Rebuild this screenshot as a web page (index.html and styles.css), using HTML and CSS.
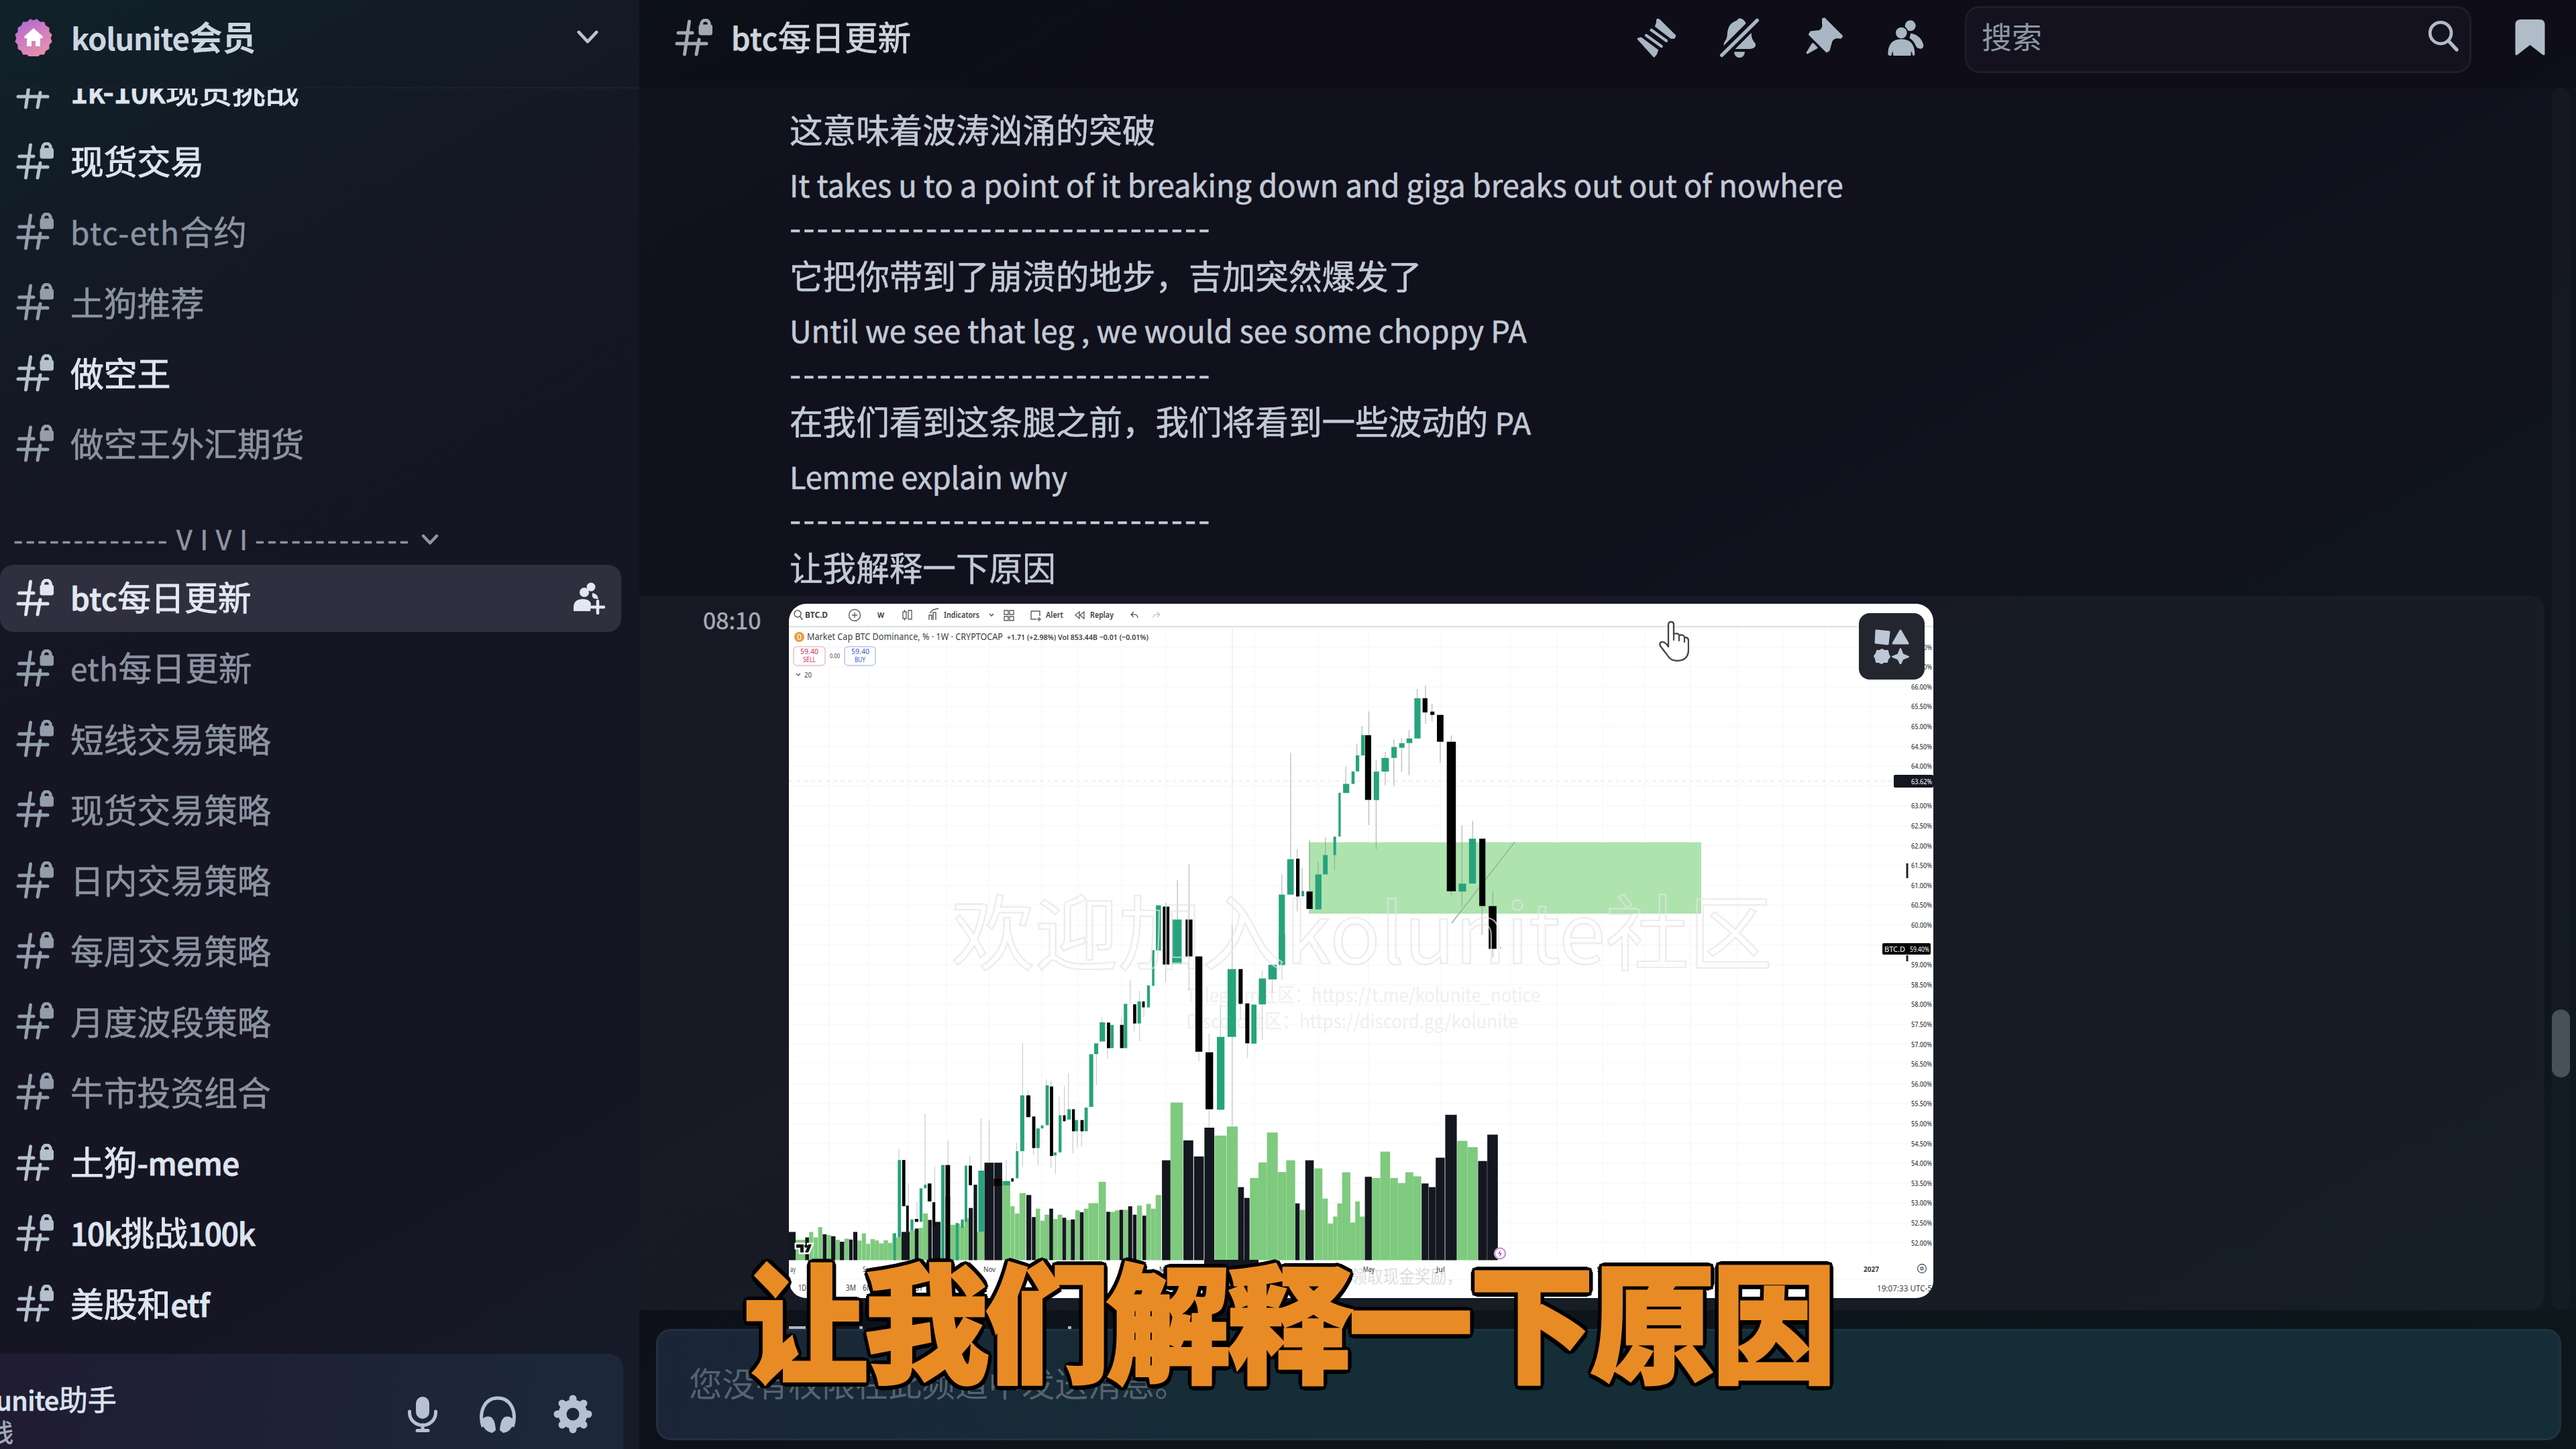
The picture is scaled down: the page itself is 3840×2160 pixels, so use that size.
FILE: index.html
```html
<!DOCTYPE html>
<html lang="zh-CN">
<head>
<meta charset="utf-8">
<title>btc每日更新</title>
<link rel="stylesheet" href="styles.css">
</head>
<body>
<svg class="defs" aria-hidden="true">
  <symbol id="hash" viewBox="0 0 56 56">
    <path d="M21.5 4 14.5 53M36 31 32 53M5 21H26M3 37H47" fill="none" stroke="currentColor" stroke-width="5" stroke-linecap="round"/>
    <path d="M39.500 12V8.500a6 6.500 0 0 1 12 0V12" fill="none" stroke="currentColor" stroke-width="5"/>
    <rect x="35.500" y="8.500" width="20.500" height="16" rx="3.500" fill="currentColor"/>
  </symbol>
</svg>
<div class="app">
  <aside class="sidebar">
    <header class="server">
      <svg class="badge" viewBox="0 0 56 56"><defs><linearGradient id="bg" x1="0" y1="0" x2=".6" y2="1"><stop offset="0" stop-color="#a866d6"/><stop offset=".5" stop-color="#cf7cc0"/><stop offset="1" stop-color="#e48fae"/></linearGradient></defs>
        <path fill="url(#bg)" stroke="url(#bg)" stroke-width="3" stroke-linejoin="round" d="M28 4l5-2 4 4 6 0 2 5 5 3 0 6 4 4-2 5 2 5-4 4 0 6-5 3-2 5-6 0-4 4-5-2-5 2-4-4-6 0-2-5-5-3 0-6-4-4 2-5-2-5 4-4 0-6 5-3 2-5 6 0 4-4z"/>
        <path fill="#fff" d="M28 14 14.500 26v3H18V41h7V33h6v8h7V29h3.500V26z"/></svg>
      <h1 class="server-name"><span class="l">kolunite</span>会员</h1>
      <svg class="chevron" viewBox="0 0 36 22"><path d="M4 3 18 18 32 3" fill="none" stroke="currentColor" stroke-width="5" stroke-linecap="round" stroke-linejoin="round"/></svg>
    </header>
    <nav class="channels">
      <a class="ch unread"><svg class="hash"><use href="#hash"/></svg><span class="name"><span class="l">1k-10k</span>现货挑战</span></a>
      <a class="ch unread"><svg class="hash"><use href="#hash"/></svg><span class="name">现货交易</span></a>
      <a class="ch"><svg class="hash"><use href="#hash"/></svg><span class="name"><span class="l wide">btc-eth</span>合约</span></a>
      <a class="ch"><svg class="hash"><use href="#hash"/></svg><span class="name">土狗推荐</span></a>
      <a class="ch unread"><svg class="hash"><use href="#hash"/></svg><span class="name">做空王</span></a>
      <a class="ch"><svg class="hash"><use href="#hash"/></svg><span class="name">做空王外汇期货</span></a>
      <div class="category"><span class="dash">-------------</span><span class="vivi">V I V I</span><span class="dash">-------------</span><svg viewBox="0 0 36 22"><path d="M4 3 18 18 32 3" fill="none" stroke="currentColor" stroke-width="6" stroke-linecap="round" stroke-linejoin="round"/></svg></div>
      <a class="ch active"><svg class="hash"><use href="#hash"/></svg><span class="name"><span class="l">btc</span>每日更新</span>
        <svg class="invite" viewBox="0 0 48 48"><g fill="currentColor"><circle cx="17" cy="15" r="7"/><circle cx="27" cy="7" r="6.500"/><path d="M29 16q8 1 9 9l-7-1q-3-2-2-8zM1 43V36Q2 25 15 25q10 0 12 7l-1 11z"/></g><path d="M37 28V46M28 37H46" stroke="currentColor" stroke-width="4.500" stroke-linecap="round"/></svg></a>
      <a class="ch"><svg class="hash"><use href="#hash"/></svg><span class="name"><span class="l">eth</span>每日更新</span></a>
      <a class="ch"><svg class="hash"><use href="#hash"/></svg><span class="name">短线交易策略</span></a>
      <a class="ch"><svg class="hash"><use href="#hash"/></svg><span class="name">现货交易策略</span></a>
      <a class="ch"><svg class="hash"><use href="#hash"/></svg><span class="name">日内交易策略</span></a>
      <a class="ch"><svg class="hash"><use href="#hash"/></svg><span class="name">每周交易策略</span></a>
      <a class="ch"><svg class="hash"><use href="#hash"/></svg><span class="name">月度波段策略</span></a>
      <a class="ch"><svg class="hash"><use href="#hash"/></svg><span class="name">牛市投资组合</span></a>
      <a class="ch unread"><svg class="hash"><use href="#hash"/></svg><span class="name">土狗<span class="l">-meme</span></span></a>
      <a class="ch unread"><svg class="hash"><use href="#hash"/></svg><span class="name"><span class="l tight">10k</span>挑战<span class="l tight">100k</span></span></a>
      <a class="ch unread"><svg class="hash"><use href="#hash"/></svg><span class="name">美股和<span class="l">etf</span></span></a>
    </nav>
    <section class="user">
      <div class="who"><div class="nick"><span class="l">kolunite</span>助手</div><div class="status">在线</div></div>
      <svg class="ui" viewBox="0 0 58 58"><rect x="19" y="3" width="20" height="33" rx="10" fill="currentColor"/><path d="M9.500 25v2a19.500 18.500 0 0 0 39 0v-2M29 45v8M21 53.500h16" fill="none" stroke="currentColor" stroke-width="5" stroke-linecap="round"/></svg>
      <svg class="ui" viewBox="0 0 58 58"><path d="M7 48C0 26 9 5 29 5s29 21 22 43" fill="none" stroke="currentColor" stroke-width="5"/><path d="M5 38q5-7 13-5 7 3 8 20l-5 4q-14-2-16-19zM53 38q-5-7-13-5-7 3-8 20l5 4q14-2 16-19z" fill="currentColor"/></svg>
      <svg class="ui" viewBox="0 0 58 58"><circle cx="29" cy="29" r="15.500" fill="none" stroke="currentColor" stroke-width="12"/><g stroke="currentColor" stroke-width="11" stroke-linecap="round"><path d="M29 6v6M29 46v6M6 29h6M46 29h6M13 13l4 4M41 41l4 4M13 45l4-4M41 17l4-4"/></g></svg>
    </section>
  </aside>

  <main class="main">
    <header class="topbar">
      <svg class="hash"><use href="#hash"/></svg>
      <h2 class="title"><span class="l">btc</span>每日更新</h2>
      <div class="tools">
        <svg viewBox="0 0 192 192"><g fill="currentColor" stroke="currentColor" stroke-linejoin="round" stroke-linecap="round"><path stroke-width="10" d="M107 17h6L185 88l-4 8H168L101 45l6-16zM22 102l11-3L106 153l-6 16-8 10z"/><path stroke-width="13" fill="none" d="M80 62 147 110M57 86 125 135"/></g></svg>
        <svg viewBox="0 0 192 192"><g fill="currentColor"><path d="M103 10Q122 12 131 33L31 133Q30 122 40 108 47 98 48 75 52 30 90 20 95 11 103 10zM155 75Q155 105 173 122 180 143 150 147H83zM78 160H126A24 26 0 0 1 78 160z"/><path stroke="currentColor" stroke-width="16" stroke-linecap="round" d="M23 175 181 19"/></g></svg>
        <svg viewBox="0 0 192 192"><g fill="currentColor" stroke="currentColor" stroke-width="10" stroke-linejoin="round"><path d="M104 14 109 12 187 90 182 96Q150 90 140 112L129 152 120 158 44 82 50 72 88 68Q110 55 104 32zM34 164 58 125 74 141z"/></g></svg>
        <svg viewBox="0 0 192 192"><g fill="currentColor"><circle cx="122" cy="43" r="24"/><path d="M124 77Q170 85 181 130 180 150 162 145 148 142 143 125 135 108 118 98z"/><circle cx="82" cy="75" r="31" class="cut"/><circle cx="82" cy="75" r="25"/><path d="M22 170Q22 104 82 103 142 104 142 170 142 177 134 177L126 155 124 177H46L43 155 37 177Q22 177 22 170z"/></g></svg>
      </div>
      <div class="search"><span>搜索</span><svg viewBox="0 0 50 50"><circle cx="20" cy="20" r="16.500" fill="none" stroke="currentColor" stroke-width="5"/><path d="M32 32 45 46" stroke="currentColor" stroke-width="5.500" stroke-linecap="round"/></svg></div>
      <svg class="bookmark" viewBox="0 0 44 54"><path fill="currentColor" d="M0 8Q0 0 8 0H36Q44 0 44 8V51Q44 55 40 52L22 38 4 52Q0 55 0 51z"/></svg>
    </header>

    <section class="feed">
      <div class="log">
        <div class="message">
          <p class="zh">这意味着波涛汹涌的突破</p>
          <p class="en"><span class="l">It takes u to a point of it breaking down and giga breaks out out of nowhere</span></p>
          <p class="rule">-------------------------------</p>
          <p class="zh">它把你带到了崩溃的地步，吉加突然爆发了</p>
          <p class="en"><span class="l">Until we see that leg , we would see some choppy PA</span></p>
          <p class="rule">-------------------------------</p>
          <p class="zh">在我们看到这条腿之前，我们将看到一些波动的<span class="l"> PA</span></p>
          <p class="en"><span class="l snug">Lemme explain why</span></p>
          <p class="rule">-------------------------------</p>
          <p class="zh">让我解释一下原因</p>
        </div>
        <div class="message hover">
          <time>08:10</time>
          <div class="shot">
            <svg id="chart" class="chart" viewBox="1176 900 1706 1035"></svg>
            <button class="apps"><svg viewBox="0 0 54 52"><g fill="currentColor" stroke="currentColor" stroke-width="3" stroke-linejoin="round"><path d="M4 2 23 4 21 22 3 20zM40 2 51 21H29z"/><path d="M12 30l4 2 5 0 1 5 2 4-3 4-1 4-5 0-3 2-4-2-4 0-1-5-2-4 3-4 1-4 4 0zM40 29l3.500 8.500L52 41l-8.500 3.500L40 52l-3.500-7.500L28 41l8.500-3.500z" stroke-width="2"/></g></svg></button>
          </div>
        </div>
      </div>
      <div class="track"><div class="thumb"></div></div>
    </section>

    <footer class="composer">
      <svg class="sliver" viewBox="0 0 430 4"><path fill="#aeb6c2" d="M0 0h25v4H0zM105 0h5v4h-5zM210 0h5v4h-5zM416 0h5v4h-5z"/></svg>
      <div class="box">您没有权限在此频道中发送消息。</div>
    </footer>
  </main>
</div>

<svg class="cursor" viewBox="0 0 46 62"><path d="M15 34V6q0-4 4-4t4 4V20q7-2 8 2 7-2 8 3 6 0 6 5V43Q45 60 28 60 18 60 13 51L3 38Q1 33 5 32 10 31 15 39z" fill="#fff" stroke="#45464c" stroke-width="2.400" stroke-linejoin="round"/><path d="M23 20v9M31 23v7M39 26v6" stroke="#45464c" stroke-width="2.200" stroke-linecap="round"/></svg>
<div class="caption">让我们解释一下原因</div>
<script src="chart.js"></script>
</body>
</html>
```
FILE: styles.css
```css
* { box-sizing: border-box; margin: 0; padding: 0; }

body {
  width: 3840px;
  height: 2160px;
  overflow: hidden;
  position: relative;
  font-family: "Noto Sans CJK SC", sans-serif;
  font-size: 49.6px;
  color: #c3c8d2;
  background: linear-gradient(to bottom right, #10212a 0%, #121c26 8%, #141824 16%, #161524 25%, #161524 50%, #151b28 60%, #142127 72%, #13252b 100%);
}

.defs { position: absolute; width: 0; height: 0; }
.app { display: flex; width: 3840px; height: 2160px; }

/* latin runs next to chinese glyphs */
.l { font-size: .912em; white-space: pre; }

.hash { width: 56px; height: 56px; flex: none; }

/* sidebar */
.sidebar { width: 953px; display: flex; flex-direction: column; flex: none; overflow: hidden; }
.server { height: 132px; flex: none; display: flex; align-items: center; padding: 0 60px 19px 22px; border-bottom: 2px solid #1a202c; }
.badge { width: 56px; height: 56px; }
.server-name { flex: 1; margin: -3px 0 0 28px; font-size: 49.8px; line-height: 60px; font-weight: 700; color: #ccd6e2; }
.server-name .l { font-weight: 700; letter-spacing: -1.200px; }
.chevron { width: 34px; height: 21px; color: #b9c2cf; }

.channels { flex: 1; overflow: hidden; display: flex; flex-direction: column; font-size: 49.8px; -webkit-text-stroke: .6px currentColor; }
.channels > :first-child { margin-top: -46px; }
.ch { height: 100px; margin-bottom: 5.250px; margin-right: 27px; padding-left: 24px; padding-right: 24px; display: flex; align-items: center; flex: none; color: #8b93a1; border-radius: 0 22px 22px 0; }
.ch .name { flex: 1; margin: -6px 0 0 25px; line-height: 60px; white-space: nowrap; }
.ch .hash { color: #939dab; margin-top: -3px; }
.ch .l { font-size: .92em; letter-spacing: .5px; }
.ch .l.wide { letter-spacing: 1.600px; }
.unread { color: #dde5ee; -webkit-text-stroke-width: 1px; }
.ch.unread .l { font-weight: 500; letter-spacing: -.5px; }
.ch.unread .l.tight { letter-spacing: -1.100px; }
.unread .hash { color: #b4c0cd; }
.active { color: #e2e8f2; background: #302f3f; border-radius: 20px; -webkit-text-stroke-width: 1px; }
.active .hash { color: #dfe6f0; }
.active .l { font-weight: 500; }
.invite { width: 48px; height: 48px; }
.category { height: 124.500px; flex: none; display: flex; align-items: center; padding: 44px 0 0 20px; color: #8f95a3; white-space: pre; font-size: 41px; line-height: 60px; }
.category .dash { letter-spacing: 3.700px; }
.category .vivi { margin: 0 10px 0 10px; letter-spacing: 1.200px; }
.category svg { width: 26px; height: 17px; margin-left: 15px; margin-top: 6px; }

.user { height: 142px; flex: none; margin-right: 24px; border-radius: 0 22px 0 0; background: linear-gradient(100deg, #201c33, #1c2737 85%); display: flex; align-items: flex-start; padding-right: 46px; overflow: hidden; -webkit-text-stroke: .7px currentColor; }
.who { flex: 1; height: 142px; overflow: hidden; display: flex; flex-direction: column; padding-top: 41px; margin-left: -54px; }
.nick { font-size: 43px; line-height: 50px; color: #dbe3ee; white-space: nowrap; margin-left: -8px; }
.nick .l { font-weight: 500; letter-spacing: -.6px; }
.status { font-size: 37px; line-height: 46px; color: #a3abb8; }
.ui { width: 58px; height: 58px; margin: 61px 0 0 54px; color: #b6c1d1; flex: none; }

/* main column */
.main { flex: 1; display: flex; flex-direction: column; background: rgba(4, 4, 10, .43); }
.topbar { height: 131px; flex: none; display: flex; align-items: center; padding: 0 46px 20px 53px; }
.topbar .hash { color: #a3a9b3; }
.title { flex: 1; font-size: 49.6px; line-height: 60px; font-weight: 400; color: #ced4de; margin: -2px 0 0 28px; -webkit-text-stroke: .8px currentColor; }
.title .l { font-weight: 500; letter-spacing: .6px; }
.tools { display: flex; gap: 60px; color: #a9b6c3; margin-right: 58px; }
.tools svg { width: 64px; height: 64px; }
.tools .cut { fill: #0d0c17; }
.search { width: 755px; height: 100px; margin-top: 6px; border: 3px solid #1f1e2a; border-radius: 22px; background: #13121e; display: flex; align-items: center; justify-content: space-between; padding: 0 14px 9px 22px; color: #8d97a5; font-size: 45px; line-height: 60px; }
.search svg { width: 48px; height: 48px; color: #b3bac6; }
.bookmark { width: 45px; height: 54px; margin-left: 65px; color: #b0bcc8; }

.feed { height: 1822px; flex: none; display: flex; overflow: hidden; background: rgba(32, 32, 50, .2); }
.log { flex: 1; display: flex; flex-direction: column; }
.message { padding-left: 224px; color: #c1cad5; -webkit-text-stroke: .6px currentColor; }
.message p { white-space: nowrap; height: 72.500px; line-height: 72.500px; }
.message .snug { letter-spacing: -.3px; }
.message:first-child { height: 757px; padding-top: 24px; }
.message .en { padding-top: 8px; }
.rule { letter-spacing: 3.100px; }
.hover { flex: 1; display: flex; padding: 12px 0 0 95px; background: rgba(150, 172, 180, .05); border-radius: 0 22px 22px 0; }
.hover time { width: 128px; font-size: 34.600px; line-height: 50px; color: #a4acb9; margin-top: -2px; }
.shot { position: relative; width: 1706px; height: 1035px; border-radius: 26px; overflow: hidden; background: #fff; -webkit-text-stroke: 0; }
.chart { display: block; width: 1706px; height: 1035px; }
.apps { position: absolute; top: 14px; right: 13px; width: 98px; height: 99px; border: 0; border-radius: 16px; background: #24262f; color: #bdc7d6; display: flex; align-items: center; justify-content: center; }
.apps svg { width: 54px; height: 52px; }
.track { width: 27px; margin: 0 9px 0 11px; border-radius: 14px; background: rgba(30, 40, 48, .3); padding-top: 1374px; }
.thumb { height: 101px; border-radius: 13px; background: #475157; }

.composer { flex: 1; padding: 24px 22px 13px 25px; display: flex; flex-direction: column; }
.sliver { width: 430px; height: 4px; margin-left: 198px; flex: none; }
.box { height: 166px; border: 3px solid rgba(80, 90, 110, .18); border-radius: 22px; background: linear-gradient(to right, #1b2537, #172a37 18%, #152d37 35%); padding: 43px 0 0 46px; color: #56636f; line-height: 66px; }

/* pointer and burned-in caption lie over the page */
.cursor { position: absolute; left: 2472px; top: 925px; width: 46px; height: 62px; }
.caption {
  position: absolute; left: 1109px; top: 1863px; line-height: 200px; white-space: nowrap;
  font-weight: 900; font-size: 184px; letter-spacing: -3.600px; color: #e98b25;
  transform: scaleY(1.03);
  -webkit-text-stroke: 5px #e98b25;
  text-shadow: 8px 0 #000, -8px 0 #000, 0 8px #000, 0 -8px #000, 6px 6px #000, -6px 6px #000, 6px -6px #000, -6px -6px #000, 7px 3px #000, -7px 3px #000, 7px -3px #000, -7px -3px #000, 3px 7px #000, -3px 7px #000, 3px -7px #000, -3px -7px #000;
}

/* chart */
.chart text { font-family: "Noto Sans", sans-serif; fill: #3c3f46; }
.grid { stroke: #f9fafa; stroke-width: 2; fill: none; }
.axis { stroke: #e4e5e8; stroke-width: 2.500; fill: none; }
.season { stroke: #f0f1f1; stroke-width: 2; fill: none; }
.cross { stroke: #e8e9eb; stroke-width: 1.500; stroke-dasharray: 6 5; fill: none; }
.trend { stroke: #8fb59a; stroke-width: 1.500; fill: none; }
.vol-up { fill: #7eca7e; }
.vol-dn { fill: #14171f; }
.up { fill: #27a37c; }
.dn { fill: #020203; }
.wick { fill: #8b9492; fill-opacity: .55; }
.zone { fill: #aee3ae; }
.chart .mark { fill: none; stroke: #e4e4e6; stroke-width: 2.200; stroke-opacity: .7; font-family: "Noto Sans CJK SC", sans-serif; font-weight: 400; }
.chart .note { fill: #efeff0; font-family: "Noto Sans CJK SC", sans-serif; }
.chart .promo { fill: #dedee0; }
```
FILE: chart.js
```js
const svg = document.getElementById('chart');
const out = [];
const rect = (x, y, w, h, c, extra = '') => out.push(`<rect x="${x.toFixed(1)}" y="${y.toFixed(1)}" width="${w.toFixed(1)}" height="${h.toFixed(1)}" class="${c}" ${extra}/>`);
const text = (x, y, size, len, str, extra = '') => out.push(`<text x="${x}" y="${y}" font-size="${size}" ${len ? `textLength="${len}" lengthAdjust="spacingAndGlyphs"` : ''} ${extra}>${str}</text>`);
const line = (d, c) => out.push(`<path d="${d}" class="${c}"/>`);

// grid
const priceY = p => 1023.7 + (66 - p) * 59.2;
for (let p = 67.5; p >= 52; p -= 0.5) line(`M1176 ${priceY(p).toFixed(1)}H2845`, 'grid');
for (const x of [1236, 1295, 1353, 1411, 1474, 1553, 1607, 1672, 1738, 1870, 1965, 2040, 2147, 2251, 2321, 2389, 2452, 2520, 2590, 2658, 2720, 2788]) line(`M${x} 935V1876`, 'grid');
line('M1176 934H2882', 'axis');
line('M1837 935V1876', 'season');
line('M1176 1164.500H2823', 'cross');
line('M1176 1907H2882', 'grid');
rect(1951, 1255.500, 585, 106.500, 'zone');

// community links sit below the series
text(1768, 1494, 29, 528, 'Telegram社区：https://t.me/kolunite_notice', 'class="note"');
text(1768, 1533, 29, 495, 'Discord社区：https://discord.gg/kolunite', 'class="note"');

// each segment of the series has its own origin and step
const segments = [
  { x: 1160, y: 1400, sx: .4337, sy: .3571, base: 1340,
    volUp: [[60,93,1255],[107,120,1222],[122,136,1245],[138,151,1202],[167,181,1235],[198,211,1255],[228,243,1250],[273,286,1258],[288,301,1228],[303,316,1272],[318,332,1252],[333,346,1258],[347,362,1270],[363,377,1257],[378,392,1268],[393,405,1228],[406,424,1245],[453,470,1215],[484,497,1205],[498,514,1145],[592,610,1192],[611,625,1188],[626,640,1200],[641,655,1165],[684,708,1222],[771,797,1010],[799,812,1115],[814,829,1145],[830,850,1060],[886,900,1125],[902,915,1175],[916,931,1150],[946,960,1168],[961,976,1150],[991,1006,1172],[1022,1036,1132],[1051,1066,1125],[1067,1083,1102],[1084,1100,1102],[1102,1126,1013],[1142,1157,1138],[1158,1172,1132],[1187,1202,1130],[1234,1250,1112],[1266,1281,1105],[1282,1297,1125],[1298,1316,1068],[1349,1391,682]],
    volDn: [[37,60,1222],[93,106,1245],[153,166,1232],[182,197,1240],[212,227,1263],[244,256,1254],[258,272,1222],[424,452,1222],[470,483,1208],[515,528,1172],[530,558,1180],[575,591,1075],[655,669,1122],[672,684,1025],[709,741,933],[743,770,933],[853,870,1068],[872,885,1160],[932,945,1125],[977,990,1163],[1006,1020,1170],[1037,1050,1140],[1128,1141,1138],[1173,1186,1130],[1203,1217,1115],[1219,1232,1150],[1252,1265,1154],[1319,1348,923],[1393,1427,840],[1429,1463,907],[1465,1499,787]],
    wick: [[840,435,652],[859,630,652],[922,585,610],[938,590,615],[938,905,955],[953,903,980],[966,655,735],[984,612,735],[998,560,710],[1013,802,895],[1043,802,865],[1028,802,870],[878,872,900],[893,872,945],[1132,455,500],[1210,172,270],[1224,352,385],[1242,352,425],[1242,215,260],[1257,285,325],[505,728,1025],[538,948,1098],[584,840,943],[697,748,966],[726,755,933],[415,875,922],[448,1020,1112],[659,905,945],[1332,106,180],[1412,72,215],[1446,470,510],[1481,395,472],[1481,710,787],[1520,280,408],[820,850,885],[784,920,1010],[840,885,950],[477,1100,1168],[1112,325,347],[1180,325,358],[1094,480,610]],
    up: [[1302,1314,-20,46],[1285,1293,46,195],[1268,1278,193,285],[1235,1247,260,352],[1188,1200,270,455],[1142,1153,358,455],[1105,1124,347,427],[1086,1100,435,480],[1069,1083,480,700],[1053,1064,703,802],[1019,1031,755,802],[994,1006,710,753],[964,974,735,890],[919,930,610,777],[903,912,777,790],[887,899,790,872],[832,846,652,885],[817,826,885,998],[773,797,1010,1028],[947,957,890,903],[411,422,922,1245],[486,496,1040,1180],[501,510,1025,1040],[560,572,943,1340],[641,650,945,1180],[688,708,966,1222],[396,405,1228,1340],[610,620,1185,1340],[628,638,1170,1205],[455,465,1170,1215],[1508,1534,408,712]],
    dn: [[1434,1458,72,470],[1469,1495,472,710],[1251,1260,260,285],[1220,1231,272,352],[1175,1187,358,455],[1130,1141,348,455],[1039,1050,755,802],[1010,1020,710,802],[979,988,735,760],[934,945,615,905],[873,884,740,872],[853,867,652,743],[801,809,998,1012],[426,437,922,1115],[440,449,1112,1222],[514,527,1020,1095],[530,540,1098,1200],[575,591,943,1340],[655,666,945,1027],[470,482,1168,1180],[741,770,1000,1030]] },
  { x: 1800, y: 1400, sx: .3827, sy: .3571, base: 1340,
    volUp: [[28,74,820],[76,117,782],[166,198,997],[199,231,932],[232,273,807],[274,306,972],[307,341,923],[361,379,1130],[417,447,957],[448,468,1083],[469,489,1187],[490,505,1158],[506,524,1103],[525,556,973],[557,575,1183],[576,593,1095],[594,612,1158],[641,673,997],[674,711,887],[712,741,997],[742,770,1018],[771,801,973],[802,832,990],[973,1012,842],[1013,1052,868]],
    volDn: [[119,142,1035],[143,164,1080],[342,359,1103],[381,414,923],[613,640,992],[834,861,1020],[862,888,1035],[889,924,912],[926,971,733],[1054,1089,926],[1090,1131,816]],
    wick: [[96,-60,125],[96,408,780],[128,270,335],[155,435,495],[213,272,420],[213,130,164],[252,168,225],[290,108,170]],
    up: [[78,111,125,408],[171,191,273,436],[200,228,164,272],[237,270,107,168],[278,302,-20,108]],
    dn: [[121,137,125,270],[147,163,268,435]] },
  { x: 1160, y: 880, sx: .574, sy: .3571,
    wick: [[1037,1210,1374],[1067,1143,1374],[1007,1305,1320],[1331,678,1122],[1348,1080,1120],[1348,1278,1340],[1534,505,605],[1534,875,980],[1516,567,604],[1503,640,689],[1474,735,808],[1421,1030,1105],[1308,1185,1270],[1402,1130,1186],[1361,1160,1255],[1380,1040,1257],[1445,1105,1170]],
    up: [[981,994,1315,1503],[970,977,1503,1520],[1023,1048,1374,1560],[1300,1316,1270,1562],[1322,1339,1122,1270],[1359,1366,1255,1277],[1395,1411,1186,1332],[1415,1427,1105,1186],[1442,1449,1028,1105],[1455,1461,845,1028],[1467,1483,808,846],[1489,1497,756,808],[1500,1509,689,756],[1514,1523,604,689]],
    dn: [[999,1016,1320,1562],[1058,1076,1374,1528],[1345,1354,1120,1278],[1372,1388,1257,1330],[1524,1540,605,875]] },
  { x: 2000, y: 880, sx: .6122, sy: .4082,
    wick: [[84,766,945],[84,620,662],[106,590,612],[106,662,712],[127,545,572],[127,612,715],[146,575,662],[146,540,558],[164,510,541],[164,558,675],[184,360,394],[204,348,394],[204,446,487],[220,415,480],[240,553,630],[267,530,553],[267,1099,1115],[293,858,1071],[293,1100,1155],[319,842,907],[342,1153,1258],[368,1100,1153],[368,1309,1340],[387,1300,1310]],
    up: [[78,91,662,766],[97,115,612,662],[121,134,572,612],[140,153,558,575],[158,172,541,558],[177,192,394,541],[285,303,1071,1100],[310,327,907,1071]],
    dn: [[197,209,394,446],[216,226,443,455],[232,248,455,553],[256,278,553,1099],[335,350,907,1153],[358,377,1153,1309]] }
];
line('M2164 1376 2258 1255', 'trend');
for (const s of segments) {
  const put = (x1, x2, y1, y2, c) => rect(s.x + x1 * s.sx, s.y + y1 * s.sy, (x2 - x1) * s.sx, (y2 - y1) * s.sy, c);
  for (const [a, b, t] of s.volUp || []) put(a - .5, b + .5, t, s.base, 'vol-up');
  for (const [a, b, t] of s.volDn || []) put(a, b, t, s.base, 'vol-dn');
  for (const [x, t, b] of s.wick) put(x - 1.2, x + 1.2, t, b, 'wick');
  for (const [a, b, t, e] of s.up) put(a, b, t, e, 'up');
  for (const [a, b, t, e] of s.dn) put(a, b, t, e, 'dn');
}
rect(1795, 1878, 81, 20, 'vol-dn');

// watermark
text(1418, 1436, 122, 1224, '欢迎加入kolunite社区', 'class="mark"');
text(2014, 1913, 27, 166, '领取现金奖励，', 'class="note promo"');

// toolbar
const ic = (d, w = 1.6) => out.push(`<path d="${d}" fill="none" stroke="#55585f" stroke-width="${w}"/>`);
const ring = (x, y, r, w = 1.4) => out.push(`<circle cx="${x}" cy="${y}" r="${r}" fill="none" stroke="#55585f" stroke-width="${w}"/>`);
ring(1189, 915, 5); ic('M1192.500 919l4 5');
text(1200, 921, 12, 34, 'BTC.D', 'font-weight="700"');
ring(1274, 917, 8.5); ic('M1274 913v8M1270 917h8', 1.3);
text(1308, 921, 11, 10, 'W', 'font-weight="700"');
ic('M1346 912h5v10h-5zM1348.500 909v3M1348.500 922v3M1354 910h5v13h-5z', 1.3);
ic('M1385 924v-7h4v7M1391 924v-11h4v11M1386 914l5-5 8-2', 1.4);
text(1407, 921, 12, 53, 'Indicators', 'font-weight="600"');
ic('M1475 915l3 3 3-3');
ic('M1497 910h6v6h-6zM1505 910h6v6h-6zM1497 919h6v6h-6zM1505 919h6v6h-6z', 1.3);
ic('M1537 911h13v7M1537 911v12h8M1549 920v6M1546 923h6', 1.4);
text(1559, 921, 12, 26, 'Alert', 'font-weight="600"');
ic('M1609 912l-6 5 6 5zM1616 912l-6 5 6 5z', 1.3);
text(1625, 921, 12, 35, 'Replay', 'font-weight="600"');
ic('M1696 921a5 5 0 0 0-6-5h-4M1690 912l-4 4 4 4', 1.3);
out.push('<g opacity=".35">'); ic('M1719 921a5 5 0 0 1 6-5h4M1725 912l4 4-4 4', 1.3); out.push('</g>');
out.push('<circle cx="1191.500" cy="949.500" r="7.500" fill="#ef9a37"/><path d="M1189.500 946h3a1.800 1.800 0 0 1 0 3.500a1.800 1.800 0 0 1 0 3.500h-3z" fill="none" stroke="#fff" stroke-width="1.200"/>');
text(1203, 954, 14, 292, 'Market Cap BTC Dominance, % · 1W · CRYPTOCAP');
text(1501, 954, 11.5, 211, '+1.71 (+2.98%) Vol 853.44B −0.01 (−0.01%)', 'font-weight="600"');
out.push('<rect x="1183" y="964" width="47" height="28" rx="5" fill="#fff" stroke="#eebcc9" stroke-width="1.500"/><rect x="1259" y="964" width="46" height="28" rx="5" fill="#fff" stroke="#b9c4ee" stroke-width="1.500"/>');
text(1193, 975, 10.5, 27, '59.40', 'style="fill:#d03058"');
text(1197, 987, 10.5, 19, 'SELL', 'style="fill:#d03058"');
text(1269, 975, 10.5, 27, '59.40', 'style="fill:#3858c8"');
text(1274, 987, 10.5, 16, 'BUY', 'style="fill:#3858c8"');
text(1237, 981, 9.5, 15, '0.00');
ic('M1187 1004l3 3 3-3', 1.3);
text(1199, 1010, 11, 11, '20');

// price and time scales
for (let p = 67; p >= 52; p -= 0.5) if (p !== 63.5 && p !== 59.5) text(2849, +(priceY(p) + 4).toFixed(1), 11, 31, p.toFixed(2) + '%', 'font-weight="500"');
rect(2823, 1155, 59, 19, 'vol-dn', 'rx="2"');
rect(2806, 1406, 72, 17, 'dn', 'rx="2"');
text(2849, 1169, 11, 31, '63.62%', 'style="fill:#fff"');
text(2809, 1419, 11, 31, 'BTC.D', 'style="fill:#fff"');
text(2847, 1419, 11, 29, '59.40%', 'style="fill:#fff"');
out.push('<path d="M2843 1287v22M2843 1424v9" stroke="#222" stroke-width="3"/>');
text(1178, 1896, 11, 8, 'ay'); text(1286, 1896, 11, 14, 'Sep'); text(1466, 1896, 11, 18, 'Nov'); text(1728, 1896, 11, 18, 'Mar');
text(2032, 1896, 11, 17, 'May'); text(2141, 1896, 11, 13, 'Jul'); text(2380, 1896, 11, 20, 'Sep'); text(2778, 1896, 11, 23, '2027', 'font-weight="700"');
ring(2865, 1891, 6.5, 1.3); ring(2865, 1891, 2, 1.3);
text(1190, 1924, 12, 12, '1D'); text(1261, 1924, 12, 15, '3M'); text(1286, 1924, 12, 15, '6M'); text(1364, 1924, 12, 12, '5Y');
text(2798, 1925, 13, 82, '19:07:33 UTC-5');
out.push('<path d="M1187 1855h11v12h-5v-7h-6zM1205 1867l5-12h-5l-5 12z" fill="#111" stroke="#fff" stroke-width="5" paint-order="stroke"/><circle cx="1201.500" cy="1857.500" r="2.500" fill="#111"/>');
out.push('<circle cx="2236" cy="1868.500" r="8" fill="#fff" stroke="#c79bd6" stroke-width="2.500"/><path d="M2237 1863l-4 6h3l-1 5 4-6h-3z" fill="#9b4fb5"/>');
svg.innerHTML = out.join('');
```
